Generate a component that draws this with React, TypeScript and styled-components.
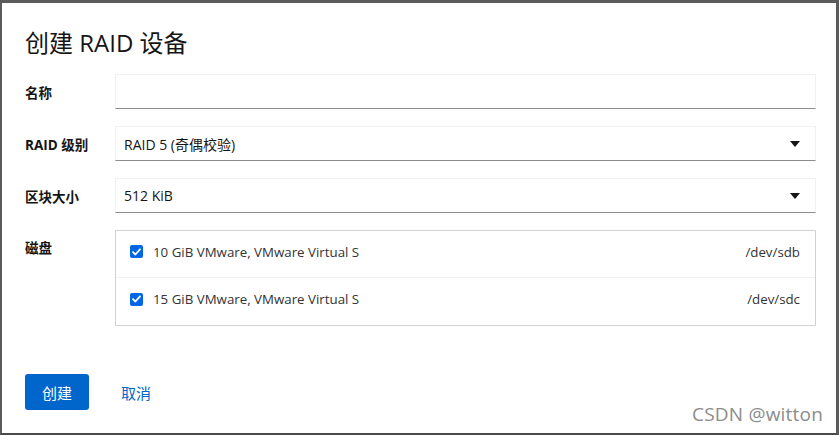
import React from "react";
import styled, { createGlobalStyle } from "styled-components";

const Global = createGlobalStyle`
  html, body { margin: 0; padding: 0; background: #ffffff; }
  body { font-family: "Open Sans", "Noto Sans CJK SC", sans-serif; color: #151515; }
  * { box-sizing: border-box; }
`;

const Frame = styled.div`
  width: 839px;
  height: 435px;
  border-top: 3px solid #5b5b5b;
  border-left: 2px solid #5b5b5b;
  border-right: 3px solid #5b5b5b;
  border-bottom: 2px solid #4a4a4a;
  background: #fff;
  position: relative;
  overflow: hidden;
`;

const Modal = styled.div`
  padding: 25px 20px 0 23px;
  display: flex;
  flex-direction: column;
`;

const Title = styled.h1`
  margin: 0 0 16px 0;
  font-size: 24px;
  font-weight: 400;
  line-height: 30px;
  color: #151515;
  font-family: "Open Sans", "Noto Sans CJK SC", sans-serif;
`;

const Form = styled.div`
  display: grid;
  grid-template-columns: 90px 1fr;
  row-gap: 17px;
`;

const Label = styled.div<{ top?: boolean }>`
  font-size: 13.5px;
  font-weight: 700;
  color: #151515;
  display: flex;
  align-items: ${(p) => (p.top ? "flex-start" : "center")};
  padding-top: ${(p) => (p.top ? "7px" : "0")};
`;

const Field = styled.div`
  height: 35px;
  border: 1px solid #f0f0f0;
  border-bottom: 1px solid #8a8d90;
  display: flex;
  align-items: center;
  padding: 0 15px 0 8px;
  font-size: 14px;
  color: #151515;
`;

const Value = styled.span`
  flex: 1;
`;

const Caret = styled.svg`
  width: 10px;
  height: 6px;
`;

const DiskList = styled.div`
  border: 1px solid #d2d2d2;
  display: flex;
  flex-direction: column;
`;

const DiskRow = styled.label<{ last?: boolean }>`
  height: 47px;
  display: flex;
  align-items: center;
  padding: 0 15px 5px 14px;
  font-size: 13.3px;
  color: #333;
  border-bottom: ${(p) => (p.last ? "none" : "1px solid #f0f0f0")};
`;

const Check = styled.span`
  width: 13px;
  height: 13px;
  border-radius: 2px;
  background: #0066e6;
  display: inline-flex;
  align-items: center;
  justify-content: center;
  margin-right: 10px;
`;

const DiskName = styled.span`
  flex: 1;
`;

const DiskPath = styled.span`
  color: #333;
`;

const Footer = styled.div`
  display: flex;
  align-items: center;
  gap: 32px;
  margin-top: 48px;
`;

const PrimaryButton = styled.button`
  width: 64px;
  height: 36px;
  background: #0066cc;
  color: #fff;
  border: none;
  border-radius: 3px;
  font-size: 15px;
  font-family: "Noto Sans CJK SC", sans-serif;
  cursor: pointer;
`;

const LinkButton = styled.button`
  background: none;
  border: none;
  padding: 0;
  color: #0066cc;
  font-size: 15px;
  font-family: "Noto Sans CJK SC", sans-serif;
  cursor: pointer;
`;

const Watermark = styled.div`
  position: absolute;
  right: 13px;
  bottom: 6px;
  font-family: "Open Sans", sans-serif;
  font-size: 19px;
  color: #8c8c8c;
  letter-spacing: 0.2px;
`;

const BottomMark = styled.div`
  position: absolute;
  left: 335px;
  bottom: -2px;
  width: 40px;
  height: 2px;
  background: #102a4a;
`;

const CaretIcon = () => (
  <Caret viewBox="0 0 10 6">
    <path d="M0 0 L10 0 L5 6 Z" fill="#151515" />
  </Caret>
);

const CheckIcon = () => (
  <svg width="9" height="8" viewBox="0 0 9 8">
    <path d="M1 4.2 L3.4 6.5 L8 1.3" stroke="#fff" strokeWidth="1.8" fill="none" strokeLinecap="round" strokeLinejoin="round" />
  </svg>
);

const disks = [
  { name: "10 GiB VMware, VMware Virtual S", path: "/dev/sdb" },
  { name: "15 GiB VMware, VMware Virtual S", path: "/dev/sdc" },
];

export default function App() {
  return (
    <>
      <Global />
      <Frame>
        <Modal>
          <Title>创建 RAID 设备</Title>
          <Form>
            <Label>名称</Label>
            <Field />
            <Label>RAID 级别</Label>
            <Field>
              <Value>RAID 5 (奇偶校验)</Value>
              <CaretIcon />
            </Field>
            <Label>区块大小</Label>
            <Field>
              <Value>512 KiB</Value>
              <CaretIcon />
            </Field>
            <Label top>磁盘</Label>
            <DiskList>
              {disks.map((d, i) => (
                <DiskRow key={d.path} last={i === disks.length - 1}>
                  <Check>
                    <CheckIcon />
                  </Check>
                  <DiskName>{d.name}</DiskName>
                  <DiskPath>{d.path}</DiskPath>
                </DiskRow>
              ))}
            </DiskList>
          </Form>
          <Footer>
            <PrimaryButton>创建</PrimaryButton>
            <LinkButton>取消</LinkButton>
          </Footer>
        </Modal>
        <Watermark>CSDN @witton</Watermark>
        <BottomMark />
      </Frame>
    </>
  );
}
